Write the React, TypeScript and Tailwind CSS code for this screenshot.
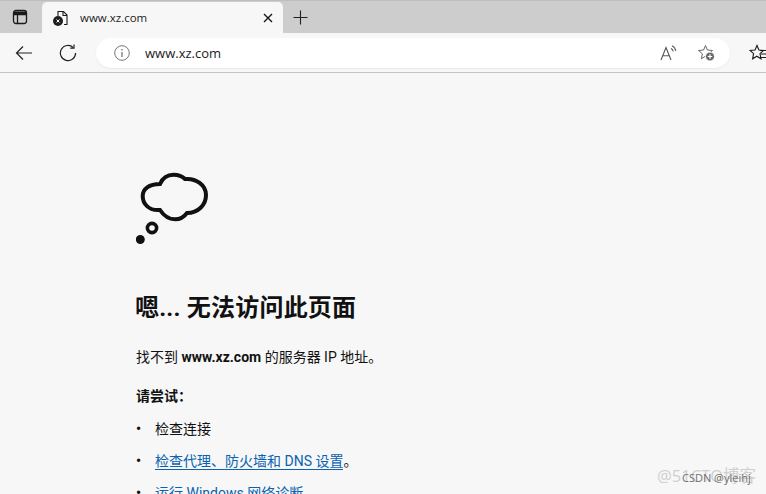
export default function App() {
  return (
    <div className="relative w-[766px] h-[494px] overflow-hidden bg-[#f7f7f7] flex flex-col font-['Open_Sans','Noto_Sans_CJK_SC',sans-serif] text-[#111]">
      <div className="h-[33px] shrink-0 bg-[#cdcdcd] flex items-end border-t border-[#bdbdbd]">
        <div className="w-[42px] h-full flex items-center justify-center pr-[2px]">
          <svg width="16" height="16" viewBox="0 0 16 16" fill="none" stroke="#1a1a1a" strokeWidth="1.3">
            <rect x="1.5" y="1.5" width="13" height="13" rx="2.5" />
            <path d="M5.5 5.5V14.5M1.5 5.5H14.5" />
            <path d="M2 2.5H14V5H2Z" fill="#1a1a1a" stroke="none" />
          </svg>
        </div>
        <div className="w-[241px] h-[31px] bg-[#f7f7f7] rounded-t-[5px] flex items-center pl-[10px] pr-[10px] shrink-0">
          <svg width="18" height="18" viewBox="0 0 18 18" fill="none" className="shrink-0">
            <path d="M6 7V2.5H11.5L15 6V15.5H12" stroke="#1a1a1a" strokeWidth="1.1" />
            <path d="M11 2.5V6.5H15" stroke="#1a1a1a" strokeWidth="1.1" />
            <circle cx="6" cy="12" r="5" fill="#1f1f1f" />
            <path d="M4.5 10.5L7.5 13.5M7.5 10.5L4.5 13.5" stroke="#fff" strokeWidth="1" />
          </svg>
          <span className="ml-[10px] text-[11.5px] leading-none text-[#1c1c1c]">www.xz.com</span>
          <svg className="ml-auto" width="10" height="10" viewBox="0 0 10 10" stroke="#111" strokeWidth="1.3">
            <path d="M1 1L9 9M9 1L1 9" />
          </svg>
        </div>
        <div className="w-[35px] h-full flex items-center justify-center">
          <svg width="15" height="15" viewBox="0 0 15 15" stroke="#222" strokeWidth="1.1">
            <path d="M7.5 0.5V14.5M0.5 7.5H14.5" />
          </svg>
        </div>
      </div>

      <div className="h-[40px] shrink-0 bg-[#f7f7f7] border-b border-[#c4c4c4] flex items-center">
        <div className="w-[48px] flex justify-center">
          <svg width="18" height="16" viewBox="0 0 18 16" fill="none" stroke="#222" strokeWidth="1.2">
            <path d="M17 8H1.5M8 1.5L1.5 8L8 14.5" />
          </svg>
        </div>
        <div className="w-[48px] flex justify-center pr-[6px]">
          <svg width="18" height="18" viewBox="0 0 18 18" fill="none" stroke="#222" strokeWidth="1.2">
            <path d="M14.3 3.6A7.6 7.6 0 1 0 16.6 9" />
            <path d="M15 0.5V4.2H11.2" />
          </svg>
        </div>
        <div className="ml-[1px] w-[634px] h-[30px] mt-[1px] bg-white rounded-full flex items-center pl-[18px] pr-[14px] shrink-0 shadow-[0_1px_2px_rgba(0,0,0,0.06)]">
          <svg width="16" height="16" viewBox="0 0 16 16" fill="none" stroke="#777" strokeWidth="1">
            <circle cx="8" cy="8" r="7.3" />
            <path d="M8 7V12M8 4V5.4" strokeWidth="1.3" />
          </svg>
          <span className="ml-[15px] text-[13px] leading-none text-[#1c1c1c]">www.xz.com</span>
          <div className="ml-auto flex items-center gap-[20px]">
            <svg width="17" height="16" viewBox="0 0 17 16" fill="none" stroke="#555" strokeWidth="1.1">
              <path d="M1 15L6 2.5L11 15M2.8 10.8H9.2" />
              <path d="M11 3.5C12.4 4.2 13 5.2 13.3 6.5M12 0.8C14.2 1.8 15.4 3.5 15.8 5.8" />
            </svg>
            <svg width="19" height="18" viewBox="0 0 19 18" fill="none">
              <path d="M8.5 1.5L10.4 6L15.5 6.5L11.7 9.8L12.8 14.8L8.5 12.2L4.4 14.8L5.4 9.8L1.5 6.5L6.6 6Z" stroke="#666" strokeWidth="1" />
              <circle cx="13" cy="12.5" r="4.5" fill="#666" stroke="#fff" />
              <path d="M13 10.3V14.7M10.8 12.5H15.2" stroke="#fff" strokeWidth="1.2" />
            </svg>
          </div>
        </div>
        <svg className="ml-[19px] shrink-0" width="17" height="17" viewBox="0 0 17 17" fill="none" stroke="#1a1a1a" strokeWidth="1.1">
          <path d="M8 1.5L9.9 6L14.5 6.5L11 9.6L12 14.8L7.8 12.2L3.6 14.8L4.6 9.6L1 6.5L6 6Z" />
          <path d="M11 6.5H17M12 10H17M12 13.5H17" />
        </svg>
      </div>

      <main className="pl-[136px] pt-[99px] font-['Roboto','Noto_Sans_CJK_SC',sans-serif]">
        <svg width="74" height="73" viewBox="0 0 74 73" fill="none" className="block" stroke="#111">
          <path
            d="M24 12 C27 5 33 2.7 37.5 2.7 C42 2.7 46 4 49 7 C60 6 70 13 70 23 C70 33 62 41 51 41 C48 45 43.5 47.3 39 47.3 C33 47.3 28 44 24 38 C13 39 6.7 32 6.7 24 C6.7 17 13 12 24 12 Z"
            strokeWidth="4"
          />
          <circle cx="16" cy="56" r="4.6" strokeWidth="3.6" />
          <circle cx="4.3" cy="67.5" r="4.5" fill="#111" stroke="none" />
        </svg>
        <h1 className="mt-[48px] ml-[-1px] text-[24px] leading-[30px] font-bold tracking-[0.2px] text-[#111]">嗯... 无法访问此页面</h1>
        <p className="mt-[24px] text-[14px] leading-[20px]">
          找不到 <b className="font-bold">www.xz.com</b> 的服务器 IP 地址。
        </p>
        <p className="mt-[19px] text-[14px] leading-[20px] font-semibold">请尝试：</p>
        <ul className="mt-[13px] text-[14px] leading-[20px]">
          <li className="flex">
            <span className="w-[19px] font-bold">•</span>
            <span>检查连接</span>
          </li>
          <li className="flex mt-[12px]">
            <span className="w-[19px] font-bold">•</span>
            <span>
              <span className="text-[#0a62b0] border-b border-[#0a62b0]">检查代理、防火墙和 DNS 设置</span>。
            </span>
          </li>
          <li className="flex mt-[12px]">
            <span className="w-[19px] font-bold">•</span>
            <span className="text-[#0a62b0]">运行 Windows 网络诊断</span>
          </li>
        </ul>
      </main>

      <span className="absolute left-[657px] top-[465px] text-[16.5px] leading-[22px] text-[#cfcfcf] whitespace-nowrap">@51CTO博客</span>
      <span className="absolute left-[682px] top-[471px] text-[11px] leading-[14px] text-[#6f6f6f] whitespace-nowrap">CSDN @yleihj</span>
    </div>
  );
}
